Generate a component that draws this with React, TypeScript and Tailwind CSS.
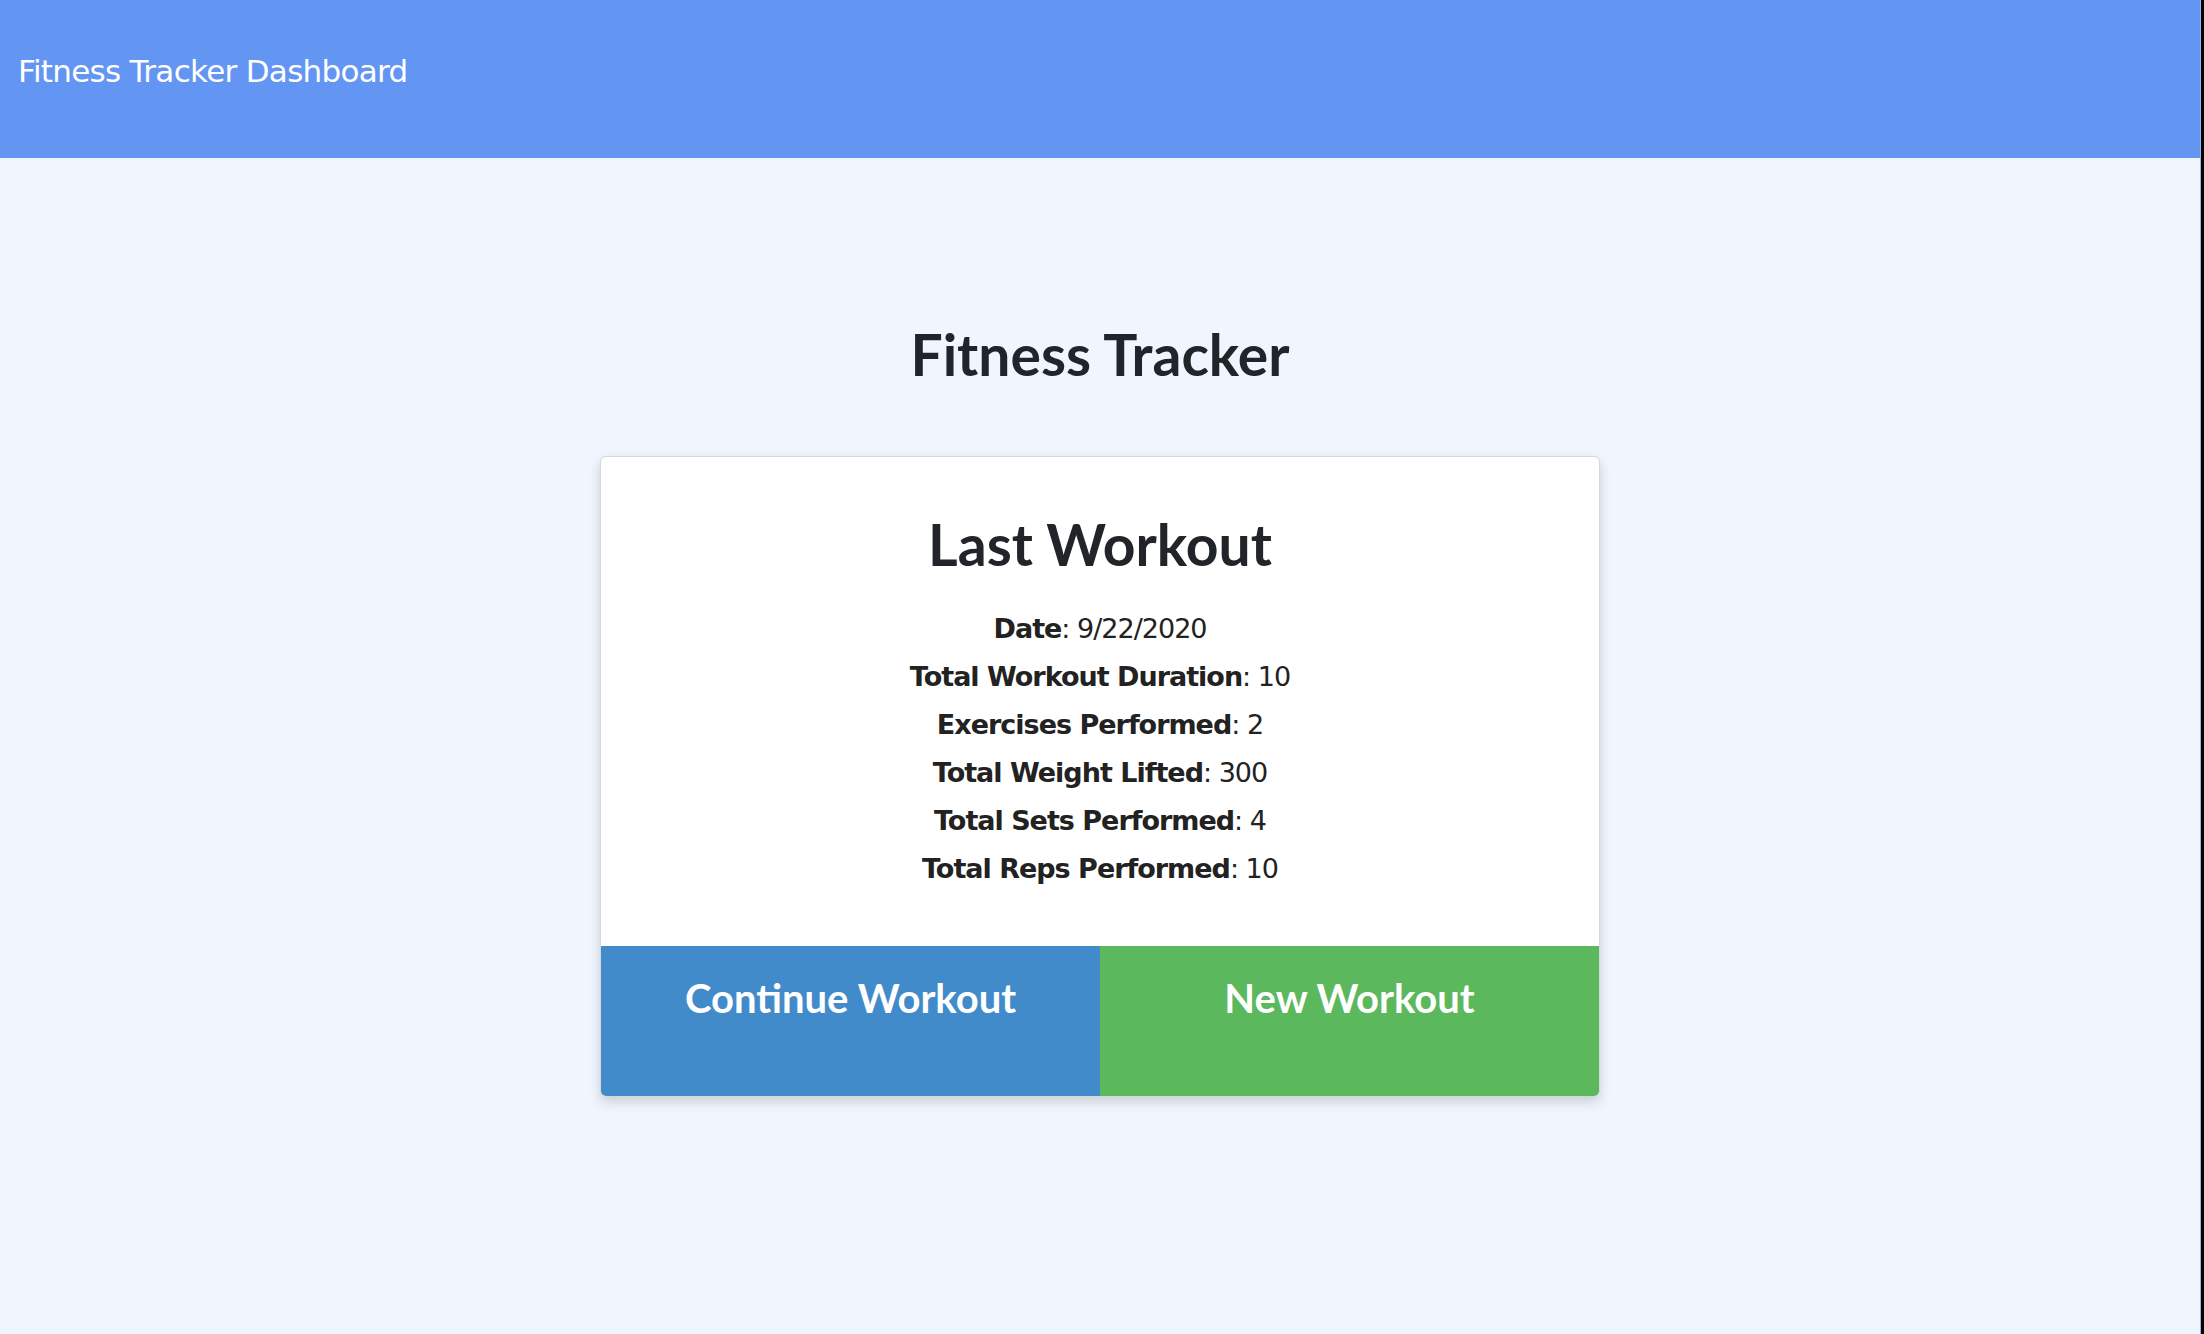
import React from "react";

const details: [string, string][] = [
  ["Date", "9/22/2020"],
  ["Total Workout Duration", "10"],
  ["Exercises Performed", "2"],
  ["Total Weight Lifted", "300"],
  ["Total Sets Performed", "4"],
  ["Total Reps Performed", "10"],
];

export default function App() {
  return (
    <div className="min-h-screen flex bg-[#F1F6FE]">
      <div className="flex-1 flex flex-col">
        <header className="h-[158px] bg-[#6395F3] pl-[18px] pt-[53px]">
          <div className="text-white text-[31px] leading-[36px] tracking-[-0.7px] font-['DejaVu_Sans',sans-serif]">
            Fitness Tracker Dashboard
          </div>
        </header>
        <main className="flex flex-col items-center pt-[162px]">
          <h1 className="text-[57px] leading-[68px] font-bold text-[#212529] font-['Lato',sans-serif]">
            Fitness Tracker
          </h1>
          <div className="mt-[68px] w-[1000px] bg-white rounded-[6px] border border-[#d5d9dd] shadow-[0_5px_12px_rgba(0,0,0,0.16)] overflow-hidden flex flex-col">
            <div className="pt-[53px] pb-[53px] flex flex-col items-center">
              <h2 className="text-[57px] leading-[68px] font-bold text-[#212529] font-['Lato',sans-serif]">
                Last Workout
              </h2>
              <div className="mt-[27px] flex flex-col items-center text-[#222] text-[27px] leading-[48px] tracking-[-1px] font-['DejaVu_Sans',sans-serif]">
                {details.map(([k, v]) => (
                  <div key={k}>
                    <span className="font-bold">{k}</span>: {v}
                  </div>
                ))}
              </div>
            </div>
            <div className="flex h-[150px]">
              <div className="flex-1 bg-[#428BCA] pt-[28px] text-center text-white text-[40px] leading-[48px] font-bold font-['Lato',sans-serif]">
                Continue Workout
              </div>
              <div className="flex-1 bg-[#5CB85C] pt-[28px] text-center text-white text-[40px] leading-[48px] font-bold font-['Lato',sans-serif]">
                New Workout
              </div>
            </div>
          </div>
        </main>
      </div>
      <div className="w-[4px] flex">
        <div className="w-[1px] bg-[#9bb3de]" />
        <div className="flex-1 bg-black" />
      </div>
    </div>
  );
}
